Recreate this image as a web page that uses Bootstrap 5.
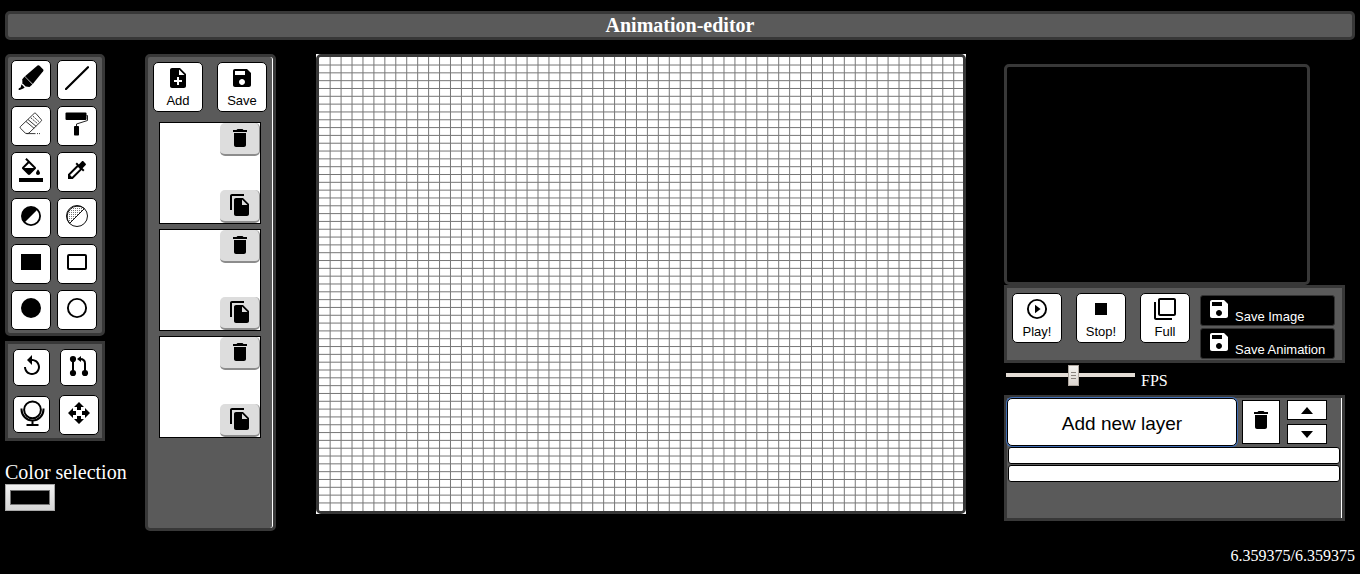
<!DOCTYPE html>
<html lang="en">
<head>
<meta charset="utf-8">
<meta name="viewport" content="width=device-width, initial-scale=1">
<title>Animation-editor</title>
<link href="https://cdn.jsdelivr.net/npm/bootstrap@5.3.0/dist/css/bootstrap.min.css" rel="stylesheet">
<style>
  :root { --edge: #383838; --panel: #5a5a5a; }
  body { background: #000; color: #fff; font-family: "Liberation Serif", serif; font-size: 16px; line-height: 20px; }
  button { font-family: "Liberation Sans", sans-serif; font-size: 13px; line-height: 16px; color: #000; padding: 0; }
  .ico { width: 24px; height: 24px; display: block; fill: currentColor; flex: none; }
  .ico-lg { width: 26px; height: 26px; }
  .page { padding: 11px 5px 0; }
  .panel { background: var(--panel); border: 3px solid var(--edge); }
  .panel-round { border-radius: 5px; }
  .gutter { box-shadow: inset -1px 0 #fff; }
  .title { font-size: 20px; line-height: 23px; font-weight: 700; }
  .workspace { margin-top: 14px; }
  .side { width: 140px; }
  .tools { width: 100px; padding: 3px; display: grid; grid-template-columns: 40px 40px; gap: 6px; }
  .extras { width: 100px; height: 100px; margin-top: 5px; display: grid; grid-template-columns: 1fr 1fr; grid-template-rows: 1fr 1fr; place-items: center; }
  .tool { width: 40px; height: 40px; background: #fff; border: 1px solid #000; border-radius: 5px; display: flex; align-items: center; justify-content: center; padding-bottom: 4px; }
  .tool-sm { width: 37px; height: 37px; }
  .color-label { font-size: 20px; line-height: 23px; margin-top: 20px; display: block; }
  .color-box { width: 50px; height: 27px; padding: 0; display: block; appearance: none; border: 1px solid #a9a9a9; background: linear-gradient(#f2f2f2, #d6d6d6); }
  .color-box::-webkit-color-swatch-wrapper { padding: 5px 4px; }
  .color-box::-webkit-color-swatch { border: 1px solid #777; }
  .frames { width: 131px; height: calc(100vh - 97px); min-height: 400px; padding: 5px; }
  .big { width: 50px; height: 50px; background: #fff; border: 1px solid #000; border-radius: 5px; padding-top: 3px; display: flex; flex-direction: column; align-items: center; gap: 3px; }
  .pair { gap: 14px; margin-bottom: 10px; }
  .thumb { width: 102px; height: 102px; background: #fff; border: 1px solid #000; margin: 0 0 5px 6px; }
  .thumb button { width: 40px; height: 33px; background: #ddd; border: 0 solid #8c8c8c; border-width: 0 1px 2px 0; border-radius: 5px; padding: 3px 0 0 8px; display: flex; }
  .stage { flex: 1; min-width: 0; margin: 0 38px 0 40px; background: #fff; }
  .stage canvas { display: block; width: 100%; aspect-ratio: 650 / 460; border: 3px solid var(--edge); border-radius: 5px; }
  .right { width: 351px; padding: 10px 10px 0 0; }
  .preview { width: 306px; height: 221px; border: 3px solid var(--edge); border-radius: 5px; }
  .controls { padding: 5px; height: 78px; }
  .save { width: 135px; height: 31px; background: #000; color: #fff; border: 1px solid #333; border-radius: 3px; padding: 1px 0 0 6px; display: flex; gap: 4px; }
  .saves { margin: 2px 0 0 -4px; gap: 2px; }
  .fps { height: 32px; padding: 2px 0 0 2px; gap: 6px; }
  .fps label { line-height: 32px; }
  .slider { appearance: none; width: 129px; height: 21px; margin: 0; background: linear-gradient(#e3dcd5, #e3dcd5) 0 8px / 100% 4px no-repeat; }
  .slider::-webkit-slider-thumb { appearance: none; width: 11px; height: 21px; border: 1px solid #b0a8a0; background: linear-gradient(#8a847e, #8a847e) 2px 6px / 5px 1px no-repeat, linear-gradient(#8a847e, #8a847e) 2px 9px / 5px 1px no-repeat, linear-gradient(#8a847e, #8a847e) 2px 12px / 5px 1px no-repeat, linear-gradient(#f4f2ef, #dcd6d0); }
  .layers { min-height: 126px; }
  .add-layer { width: 230px; height: 48px; background: #fff; border: 1px solid #000; border-radius: 5px; font-size: 19px; padding-top: 4px; box-shadow: 0 0 0 1px #3f6db5; }
  .layer-bar { gap: 5px; height: 49px; }
  .layer-tools { padding-top: 2px; gap: 7px; }
  .flat { background: #fff; border: 1px solid #000; display: flex; align-items: center; justify-content: center; }
  .del { width: 38px; height: 44px; padding-bottom: 4px; }
  .mv { width: 40px; height: 20px; }
  .mv svg { width: 12px; height: 7px; }
  .layer-row { display: block; width: calc(100% - 3px); height: 17px; background: #fff; border: 1px solid #000; border-radius: 3px; margin: 0 0 1px 1px; }
  .status { margin-top: 15px; }
</style>
</head>
<body>
<svg width="0" height="0" class="position-absolute" aria-hidden="true">
  <symbol id="marker" viewBox="0 0 26 26"><path d="M19.500.6Q20.600-.2 21.600.7L25 4.200Q25.900 5.200 25.100 6.200L14.800 19 7 11.200z"/><path d="M6.600 11.600 14.400 19.400 11.500 21.900 7.600 21.500 4.400 18.300 4.300 14.300z"/><path d="M3.500 19.300 6.700 22.500 5.300 23.600 1.700 25H.6L.8 23.200 2.600 22.500z"/></symbol>
  <symbol id="line" viewBox="0 0 24 24"><path d="M1 23 23 1.200" stroke="#000" stroke-width="2.200" stroke-linecap="round"/></symbol>
  <symbol id="eraser" viewBox="0 0 24 24"><g fill="none" stroke="#222" stroke-width=".9" stroke-linejoin="round"><path d="M1.400 14.600 15.300 1.300q.8-.6 1.500.1l5.500 6.300q.6.800-.1 1.500L9.900 21.100q-1.800 1-3.600 0L1.200 16q-.4-.8.2-1.400zM7 9.500l8.200 6.900M9 7.500l8.200 6.900M7.500 21.600h9"/><path d="m11.800 5.800 7 6M14 4.200l6 5.500" stroke-dasharray="2 1"/><path d="M18 21.600h3.500" stroke-dasharray="1 1"/></g></symbol>
  <symbol id="roller" viewBox="0 0 24 24"><rect x=".5" y=".5" width="21" height="7.500" rx="1"/><path d="M21.500 3.500h1v5L11.500 12v3" fill="none" stroke="#222" stroke-width="1"/><rect x="9" y="14" width="5" height="9.500" rx=".8"/></symbol>
  <symbol id="fill" viewBox="0 0 24 24"><path d="M16.560 8.940L7.620 0 6.210 1.410l2.380 2.380-5.150 5.150c-.59.59-.59 1.540 0 2.120l5.500 5.500c.29.29.68.44 1.060.44s.77-.15 1.060-.44l5.500-5.500c.59-.58.59-1.530 0-2.120zM5.210 10L10 5.210 14.790 10H5.210zM19 11.500s-2 2.170-2 3.500c0 1.100.9 2 2 2s2-.9 2-2c0-1.330-2-3.500-2-3.500zM0 20h24v4H0z"/></symbol>
  <symbol id="pick" viewBox="0 0 24 24"><path d="M20.710 5.630l-2.340-2.340c-.39-.39-1.020-.39-1.410 0l-3.120 3.120-1.930-1.910-1.410 1.410 1.420 1.420L3 16.250V21h4.750l8.920-8.920 1.420 1.420 1.410-1.410-1.920-1.920 3.120-3.120c.4-.4.4-1.030.01-1.420zM6.920 19L5 17.080l8.060-8.060 1.920 1.920L6.920 19z"/></symbol>
  <symbol id="contrast" viewBox="0 0 24 24"><circle cx="12" cy="12" r="9.100" fill="none" stroke="#000" stroke-width="1.800"/><path d="M5.500 18.500A9.200 9.200 0 0 1 18.500 5.500z"/></symbol>
  <pattern id="dots" width="2" height="2" patternUnits="userSpaceOnUse"><rect width="1" height="1" fill="#777"/></pattern>
  <symbol id="dither" viewBox="0 0 24 24"><circle cx="12" cy="12" r="10.500" fill="none" stroke="#111" stroke-width="1"/><path d="M4.600 19.400A10.500 10.500 0 0 1 19.400 4.600z" fill="url(#dots)" stroke="#111" stroke-width="1"/></symbol>
  <symbol id="rect" viewBox="0 0 24 24"><path d="M2 4h20v16H2z"/></symbol>
  <symbol id="rect-o" viewBox="0 0 24 24"><rect x="3" y="5" width="18" height="14" rx="1" fill="none" stroke="#000" stroke-width="2"/></symbol>
  <symbol id="disc" viewBox="0 0 24 24"><circle cx="12" cy="12" r="10"/></symbol>
  <symbol id="disc-o" viewBox="0 0 24 24"><circle cx="12" cy="12" r="9.100" fill="none" stroke="#000" stroke-width="1.900"/></symbol>
  <symbol id="undo" viewBox="0 0 24 24"><path d="M12 5V1L7 6l5 5V7c3.310 0 6 2.690 6 6s-2.690 6-6 6-6-2.690-6-6H4c0 4.420 3.580 8 8 8s8-3.580 8-8-3.580-8-8-8z"/></symbol>
  <symbol id="swap" viewBox="0 0 24 24"><circle cx="6" cy="5" r="3.100"/><circle cx="6" cy="19" r="3.100"/><circle cx="18" cy="19" r="3.100"/><path d="M6 5v14M18 19V9.500Q18 5 13 5h-1" fill="none" stroke="#000" stroke-width="2"/><path d="M14 2v6l-4-3z"/></symbol>
  <symbol id="mirror" viewBox="0 0 26 26"><g fill="none" stroke="#000" stroke-width="2"><circle cx="13.500" cy="9.800" r="8.400"/><path d="M2.500 8.500v1A11 11 0 0 0 24.500 9.500v-1M13.500 20.500v4.500M7.500 25h12"/></g></symbol>
  <symbol id="move" viewBox="0 0 24 24"><path d="M10 9h4V6h3l-5-5-5 5h3v3zm-1 1H6V7l-5 5 5 5v-3h3v-4zm14 2l-5-5v3h-3v4h3v3l5-5zm-9 3h-4v3H7l5 5 5-5h-3v-3z"/></symbol>
  <symbol id="add" viewBox="0 0 24 24"><path d="M14 2H6c-1.100 0-1.990.9-1.990 2L4 20c0 1.100.89 2 1.990 2H18c1.100 0 2-.9 2-2V8l-6-6zm2 14h-3v3h-2v-3H8v-2h3v-3h2v3h3v2zm-3-7V3.500L18.500 9H13z"/></symbol>
  <symbol id="save" viewBox="0 0 24 24"><path d="M17 3H5c-1.110 0-2 .9-2 2v14c0 1.100.89 2 2 2h14c1.100 0 2-.9 2-2V7l-4-4zm-5 16c-1.660 0-3-1.340-3-3s1.340-3 3-3 3 1.340 3 3-1.340 3-3 3zm3-10H5V5h10v4z"/></symbol>
  <symbol id="trash" viewBox="0 0 24 24"><path d="M6 19c0 1.100.9 2 2 2h8c1.100 0 2-.9 2-2V7H6v12zM19 4h-3.500l-1-1h-5l-1 1H5v2h14V4z"/></symbol>
  <symbol id="copy" viewBox="0 0 24 24"><path d="M16 1H4c-1.100 0-2 .9-2 2v14h2V3h12V1zm-1 4l6 6v10c0 1.100-.9 2-2 2H7.990C6.890 23 6 22.100 6 21l.01-14c0-1.100.89-2 1.990-2h7zm-1 7h5.500L14 6.500V12z"/></symbol>
  <symbol id="play" viewBox="0 0 24 24"><circle cx="12" cy="12" r="9.100" fill="none" stroke="#000" stroke-width="1.900"/><path d="M10 7.800v8.400L15.600 12z"/></symbol>
  <symbol id="stop" viewBox="0 0 24 24"><path d="M6 6h12v12H6z"/></symbol>
  <symbol id="full" viewBox="0 0 24 24"><path d="M3 5H1v16c0 1.100.9 2 2 2h16v-2H3V5zm18-4H7c-1.100 0-2 .9-2 2v14c0 1.100.9 2 2 2h14c1.100 0 2-.9 2-2V3c0-1.100-.9-2-2-2zm0 16H7V3h14v14z"/></symbol>
</svg>

<div class="container-fluid page">
  <header class="panel panel-round"><h1 class="title text-center mb-0">Animation-editor</h1></header>

  <main class="workspace d-flex align-items-start">
    <div class="side flex-shrink-0">
      <div class="tools panel panel-round">
        <button class="tool" aria-label="Pen"><svg class="ico ico-lg"><use href="#marker"/></svg></button>
        <button class="tool" aria-label="Line"><svg class="ico"><use href="#line"/></svg></button>
        <button class="tool" aria-label="Eraser"><svg class="ico"><use href="#eraser"/></svg></button>
        <button class="tool" aria-label="Roller"><svg class="ico"><use href="#roller"/></svg></button>
        <button class="tool" aria-label="Fill"><svg class="ico"><use href="#fill"/></svg></button>
        <button class="tool" aria-label="Pick color"><svg class="ico"><use href="#pick"/></svg></button>
        <button class="tool" aria-label="Lighten"><svg class="ico"><use href="#contrast"/></svg></button>
        <button class="tool" aria-label="Dither"><svg class="ico"><use href="#dither"/></svg></button>
        <button class="tool" aria-label="Filled rectangle"><svg class="ico"><use href="#rect"/></svg></button>
        <button class="tool" aria-label="Rectangle"><svg class="ico"><use href="#rect-o"/></svg></button>
        <button class="tool" aria-label="Filled circle"><svg class="ico"><use href="#disc"/></svg></button>
        <button class="tool" aria-label="Circle"><svg class="ico"><use href="#disc-o"/></svg></button>
      </div>
      <div class="extras panel">
        <button class="tool tool-sm" aria-label="Rotate"><svg class="ico"><use href="#undo"/></svg></button>
        <button class="tool tool-sm" aria-label="Swap"><svg class="ico"><use href="#swap"/></svg></button>
        <button class="tool tool-sm" aria-label="Mirror"><svg class="ico ico-lg"><use href="#mirror"/></svg></button>
        <button class="tool" aria-label="Move"><svg class="ico"><use href="#move"/></svg></button>
      </div>
      <label class="color-label" for="color">Color selection</label>
      <input class="color-box" type="color" id="color" value="#000000">
    </div>

    <section class="frames panel panel-round gutter flex-shrink-0" aria-label="Frames">
      <div class="pair d-flex">
        <button class="big"><svg class="ico"><use href="#add"/></svg>Add</button>
        <button class="big"><svg class="ico"><use href="#save"/></svg>Save</button>
      </div>
      <div class="thumb d-flex flex-column justify-content-between align-items-end">
        <button aria-label="Delete frame 1"><svg class="ico"><use href="#trash"/></svg></button>
        <button aria-label="Copy frame 1"><svg class="ico"><use href="#copy"/></svg></button>
      </div>
      <div class="thumb d-flex flex-column justify-content-between align-items-end">
        <button aria-label="Delete frame 2"><svg class="ico"><use href="#trash"/></svg></button>
        <button aria-label="Copy frame 2"><svg class="ico"><use href="#copy"/></svg></button>
      </div>
      <div class="thumb d-flex flex-column justify-content-between align-items-end">
        <button aria-label="Delete frame 3"><svg class="ico"><use href="#trash"/></svg></button>
        <button aria-label="Copy frame 3"><svg class="ico"><use href="#copy"/></svg></button>
      </div>
    </section>

    <div class="stage"><canvas id="grid" width="644" height="454"></canvas></div>

    <aside class="right flex-shrink-0">
      <div class="preview"></div>
      <div class="controls panel d-flex align-items-start">
        <div class="pair d-flex">
          <button class="big"><svg class="ico"><use href="#play"/></svg>Play!</button>
          <button class="big"><svg class="ico"><use href="#stop"/></svg>Stop!</button>
          <button class="big"><svg class="ico"><use href="#full"/></svg>Full</button>
          <div class="saves d-flex flex-column">
            <button class="save"><svg class="ico"><use href="#save"/></svg><span class="align-self-end">Save Image</span></button>
            <button class="save"><svg class="ico"><use href="#save"/></svg><span class="align-self-end">Save Animation</span></button>
          </div>
        </div>
      </div>
      <div class="fps d-flex align-items-start">
        <input class="slider" type="range" id="fps" min="0" max="24" value="12.600" step="any"><label for="fps">FPS</label>
      </div>
      <section class="layers panel gutter" aria-label="Layers">
        <div class="layer-bar d-flex align-items-start">
          <button class="add-layer">Add new layer</button>
          <div class="layer-tools d-flex">
            <button class="flat del" aria-label="Delete layer"><svg class="ico"><use href="#trash"/></svg></button>
            <div class="d-flex flex-column gap-1">
              <button class="flat mv" aria-label="Layer up"><svg viewBox="0 0 12 7"><path d="M0 7 6 0l6 7z"/></svg></button>
              <button class="flat mv" aria-label="Layer down"><svg viewBox="0 0 12 7"><path d="M0 0h12L6 7z"/></svg></button>
            </div>
          </div>
        </div>
        <button class="layer-row" aria-label="Layer 1"></button>
        <button class="layer-row" aria-label="Layer 2"></button>
      </section>
    </aside>
  </main>
  <footer class="status text-end">6.359375/6.359375</footer>
</div>

<script src="https://cdn.jsdelivr.net/npm/bootstrap@5.3.0/dist/js/bootstrap.bundle.min.js"></script>
<script>
  // Pixel grid of the drawing surface
  const cv = document.getElementById('grid'), g = cv.getContext('2d');
  g.fillStyle = '#fff';
  g.fillRect(0, 0, cv.width, cv.height);
  g.fillStyle = '#777';
  const cw = 10.94, ch = 7.82;
  for (let x = cw; x < cv.width - 2; x += cw) g.fillRect(x - 0.3, 0, 1, cv.height);
  for (let y = ch; y < cv.height - 2; y += ch) g.fillRect(0, y - 0.3, cv.width, 1);
</script>
</body>
</html>
